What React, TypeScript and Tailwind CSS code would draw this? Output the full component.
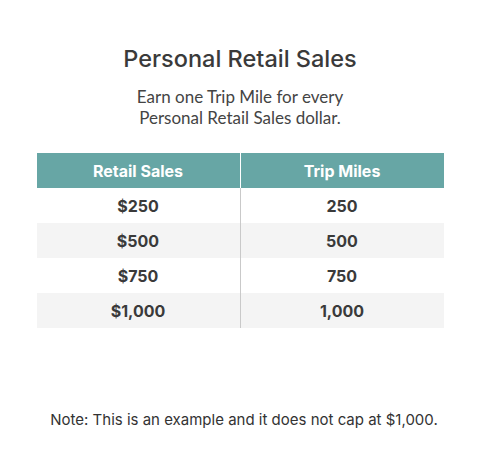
import React from 'react';

const rows = [
  { sales: '$250', miles: '250' },
  { sales: '$500', miles: '500' },
  { sales: '$750', miles: '750' },
  { sales: '$1,000', miles: '1,000' },
];

export default function App() {
  return (
    <div className="w-[480px] h-[458px] bg-white flex flex-col items-center text-[#3a3a3a] font-['Inter',sans-serif]">
      <h1 className="mt-[45px] text-[23.5px] leading-[28px] font-medium">Personal Retail Sales</h1>
      <p className="mt-[13px] text-[17px] leading-[21px] text-center text-[#444] font-['Lato',sans-serif]">
        Earn one Trip Mile for every
        <br />
        Personal Retail Sales dollar.
      </p>

      <div className="mt-[25px] w-[407px] flex flex-col text-[16px] font-bold">
        <div className="h-[35px] flex bg-[#67a6a5] text-white">
          <div className="w-[203px] flex items-center justify-center">Retail Sales</div>
          <div className="w-px bg-white" />
          <div className="flex-1 flex items-center justify-center">Trip Miles</div>
        </div>
        {rows.map((r, i) => (
          <div key={r.sales} className={`h-[35px] flex ${i % 2 === 1 ? 'bg-[#f4f4f4]' : 'bg-white'}`}>
            <div className="w-[203px] flex items-center justify-center">{r.sales}</div>
            <div className="w-px bg-[#c9c9c9]" />
            <div className="flex-1 flex items-center justify-center">{r.miles}</div>
          </div>
        ))}
      </div>

      <p className="mt-[82px] ml-[8px] text-[15px] leading-[20px] text-[#333]">
        Note: This is an example and it does not cap at $1,000.
      </p>
    </div>
  );
}
